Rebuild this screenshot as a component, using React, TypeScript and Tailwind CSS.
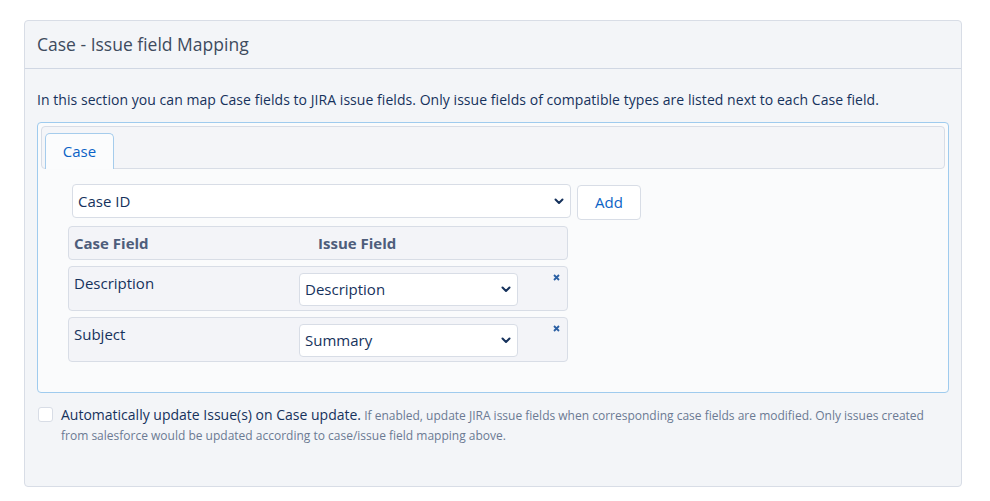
const font = { fontFamily: '"Open Sans", "Noto Sans", Arial, sans-serif' };

function Chevron() {
  return (
    <svg width="10" height="7" viewBox="0 0 10 7" className="shrink-0">
      <path d="M1.5 1.5 L5 5 L8.5 1.5" fill="none" stroke="#16325c" strokeWidth="2" strokeLinecap="round" strokeLinejoin="round" />
    </svg>
  );
}

function FakeSelect({ value, className }: { value: string; className: string }) {
  return (
    <div
      className={`flex items-center justify-between bg-white border border-[#d8dde6] rounded-[4px] pl-[5px] pr-[6px] text-[15px] text-[#16325c] ${className}`}
    >
      <span>{value}</span>
      <Chevron />
    </div>
  );
}

function RemoveX() {
  return (
    <svg width="7" height="7" viewBox="0 0 7 7" className="mt-[7px] mr-[7px]">
      <path d="M1 1 L6 6 M6 1 L1 6" stroke="#2a5fa3" strokeWidth="1.8" />
    </svg>
  );
}

const rows = [
  { field: "Description", issue: "Description" },
  { field: "Subject", issue: "Summary" },
];

export default function App() {
  return (
    <div className="bg-white w-[990px] h-[501px] pt-[20px] pl-[24px]" style={font}>
      <div className="w-[938px] h-[467px] bg-[#f3f5f8] border border-[#d8dde6] rounded-[4px]">
        {/* Header */}
        <div className="h-[48px] border-b border-[#d0d7e3] flex items-center pl-[12px]">
          <h2 className="text-[17.5px] text-[#3e4b5e]">Case - Issue field Mapping</h2>
        </div>

        {/* Body */}
        <div className="px-[12px] pt-[21px]">
          <p className="text-[14px] text-[#16325c] leading-[19px] tracking-[0.05px]">
            In this section you can map Case fields to JIRA issue fields. Only issue fields of compatible types are listed next to each Case field.
          </p>

          <div className="mt-[13px] w-[912px] h-[271px] border border-[#9fcbee] rounded-[4px] bg-[#fafbfc] p-[3px]">
            {/* Tabs */}
            <div className="h-[43px] bg-[#f4f5f8] border border-[#d8dde6] rounded-[4px] flex items-end pl-[3px]">
              <div className="w-[69px] h-[36px] bg-[#fbfcfd] border border-b-0 border-[#a5ccec] rounded-t-[5px] flex items-center justify-center text-[15px] text-[#0b63c6] -mb-px">
                Case
              </div>
            </div>

            {/* Content */}
            <div className="pl-[31px] pt-[15px]">
              <div className="flex items-start gap-[6px]">
                <FakeSelect value="Case ID" className="w-[499px] h-[34px]" />
                <button className="w-[64px] h-[35px] mt-px bg-white border border-[#d8dde6] rounded-[4px] text-[15px] text-[#0b63c6]">
                  Add
                </button>
              </div>

              <div className="-ml-[4px] mt-[6px] w-[500px] flex flex-col gap-[6px]">
                <div className="h-[34px] bg-[#f3f4f8] border border-[#d8dde6] rounded-[4px] flex items-center text-[15px] font-bold text-[#4e5d7b]">
                  <span className="pl-[5px] w-[249px]">Case Field</span>
                  <span>Issue Field</span>
                </div>
                {rows.map((r) => (
                  <div key={r.field} className="h-[45px] bg-[#f3f4f8] border border-[#d8dde6] rounded-[4px] flex items-start">
                    <span className="pl-[5px] pt-[5px] w-[230px] text-[15px] text-[#16325c]">{r.field}</span>
                    <FakeSelect value={r.issue} className="w-[219px] h-[33px] mt-[6px]" />
                    <div className="flex-1 flex justify-end">
                      <RemoveX />
                    </div>
                  </div>
                ))}
              </div>
            </div>
          </div>

          {/* Checkbox */}
          <div className="mt-[12px] flex items-start pl-px">
            <div className="w-[15px] h-[15px] mt-[2px] bg-white border border-[#d8dde6] rounded-[3px] shrink-0" />
            <p className="ml-[8px] text-[12px] leading-[20px] text-[#6b7a93]">
              <span className="text-[14px] text-[#16325c]">Automatically update Issue(s) on Case update.</span>{" "}
              If enabled, update JIRA issue fields when corresponding case fields are modified. Only issues created from salesforce would be updated according to case/issue field mapping above.
            </p>
          </div>
        </div>
      </div>
    </div>
  );
}
